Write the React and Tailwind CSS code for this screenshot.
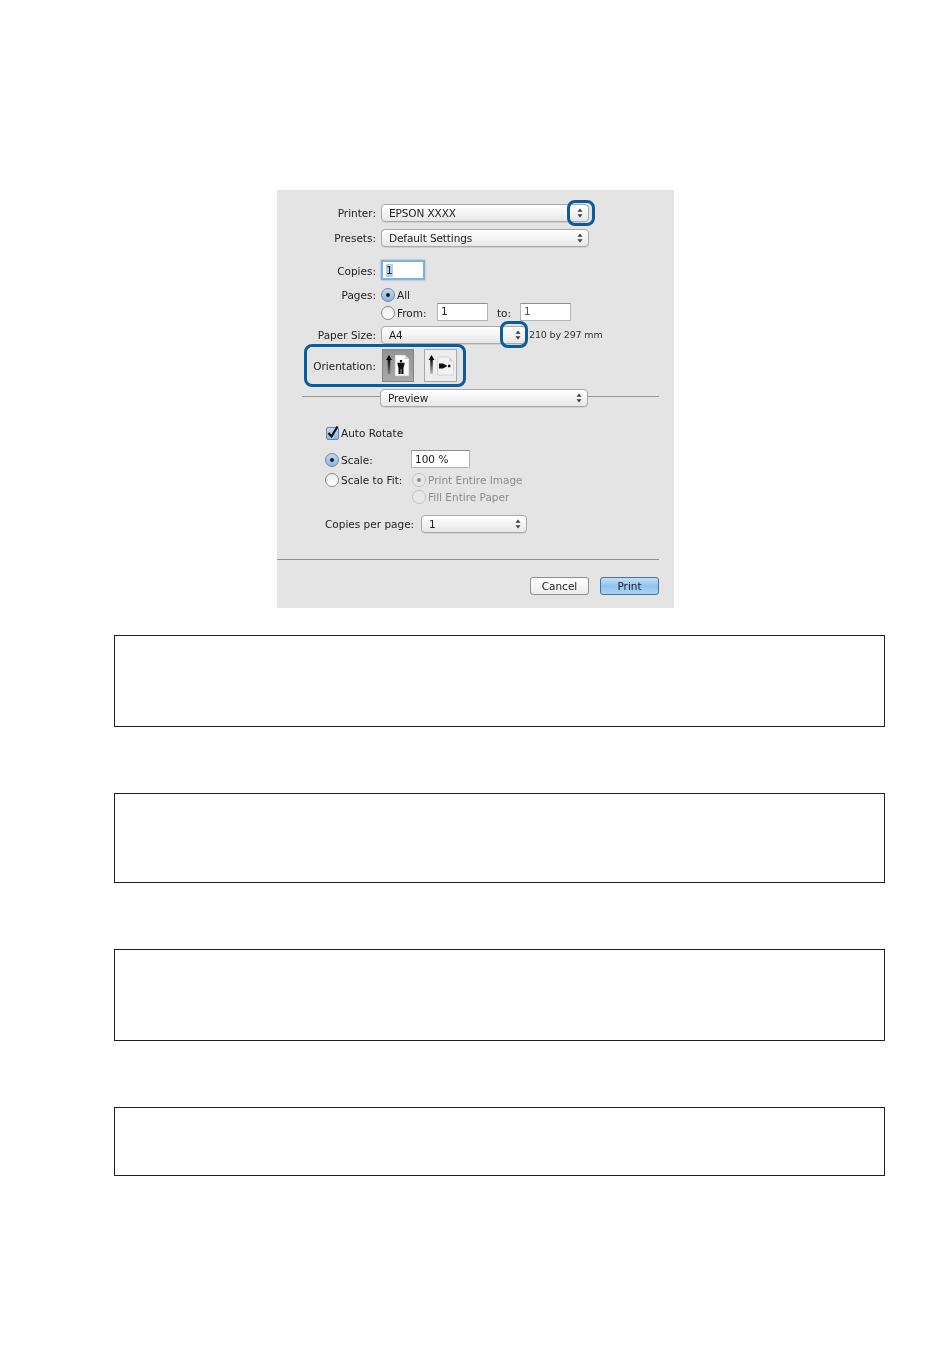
const font = { fontFamily: '"DejaVu Sans", sans-serif' };

function Arrows({ className = "" }) {
    return (
        <svg width="6" height="10" viewBox="0 0 6 10" className={className}>
            <path d="M3 0.5 L5.5 3.8 L0.5 3.8 Z" fill="#3a3a3a" />
            <path d="M3 9.5 L5.5 6.2 L0.5 6.2 Z" fill="#3a3a3a" />
        </svg>
    );
}

function Select({ label, className = "", children }) {
    return (
        <div
            className={`relative flex h-[18px] items-center justify-between rounded-[4px] border border-[#a9a9a9] bg-gradient-to-b from-white via-[#f4f4f4] to-[#e6e6e6] pl-[7px] pr-[5px] shadow-[0_1px_0_#d0d0d0] ${className}`}
        >
            <span className="text-[10.5px] leading-none tracking-[-0.1px] text-[#222]">{label}</span>
            <Arrows />
            {children}
        </div>
    );
}

function Ring({ className = "" }) {
    return (
        <div
            className={`pointer-events-none absolute rounded-[8px] border-[3px] border-[#0b5c9c] ${className}`}
        />
    );
}

function Radio({ checked, disabled, className = "" }) {
    return (
        <span
            className={`flex h-[14px] w-[14px] shrink-0 items-center justify-center rounded-full border ${className} ${
                disabled
                    ? "border-[#c4c4c4] bg-[#e8e8e8]"
                    : checked
                      ? "border-[#6b86a6] bg-gradient-to-b from-[#c3d9ef] to-[#8db7e0]"
                      : "border-[#8a8a8a] bg-gradient-to-b from-[#ececec] to-white"
            }`}
        >
            {checked && (
                <span
                    className={`h-[4px] w-[4px] rounded-full ${disabled ? "bg-[#8c8c8c]" : "bg-[#1a1a1a]"}`}
                />
            )}
        </span>
    );
}

function Field({ value, className = "", muted }) {
    return (
        <div
            className={`flex h-[18px] items-center border border-[#b5b5b5] border-t-[#8f8f8f] bg-white pl-[3px] text-[10.5px] ${
                muted ? "text-[#555]" : "text-[#222]"
            } ${className}`}
        >
            {value}
        </div>
    );
}

function Label({ children, className = "" }) {
    return (
        <span
            className={`w-[99px] shrink-0 whitespace-nowrap text-right text-[10.5px] leading-none text-[#222] ${className}`}
        >
            {children}
        </span>
    );
}

function OrientationIcon({ id, landscape }) {
    return (
        <svg width="28" height="27" viewBox="0 0 28 27">
            <defs>
                <linearGradient id={id} x1="0" y1="0" x2="0" y2="1">
                    <stop offset="0" stopColor="#000" />
                    <stop offset="1" stopColor="#000" stopOpacity="0.2" />
                </linearGradient>
            </defs>
            {landscape ? (
                <>
                    <path d="M4.5 3 L7.5 8 L1.5 8 Z" fill="#000" />
                    <rect x="3.2" y="7" width="2.6" height="15" fill={`url(#${id})`} />
                    <path d="M10.5 5 H22 L26.5 9.5 V23 H10.5 Z" fill="#f2f2f2" stroke="#c4c4c4" strokeWidth="0.6" />
                    <path d="M22 5 V9.5 H26.5 Z" fill="#d4d4d4" />
                    <path d="M12 11.5 H16 L20.5 14 L16 16.5 H12 Z M21 12.8 H23.4 V15.2 H21 Z" fill="#111" />
                </>
            ) : (
                <>
                    <path d="M5 3 L8 8 L2 8 Z" fill="#000" />
                    <rect x="3.7" y="7" width="2.6" height="15" fill={`url(#${id})`} />
                    <path d="M11 3 H21 L25 7 V24 H11 Z" fill="#fbfbfb" stroke="#bbb" strokeWidth="0.6" />
                    <path d="M21 3 V7 H25 Z" fill="#d4d4d4" />
                    <path
                        d="M15.9 8 H18.1 V10.2 H15.9 Z M13.5 10.8 H20.5 V12.2 L19.5 16 V22 H17.3 V17 H16.7 V22 H14.5 V16 L13.5 12.2 Z"
                        fill="#111"
                    />
                </>
            )}
        </svg>
    );
}

function OrientationButton({ active, landscape }) {
    return (
        <div
            className={`flex h-[33px] items-center justify-center border ${
                active
                    ? "w-[32px] border-[#858585] bg-gradient-to-b from-[#949494] to-[#a8a8a8]"
                    : "w-[33px] border-[#a9a9a9] bg-[#ededed]"
            }`}
        >
            <OrientationIcon id={active ? "tailA" : "tailB"} landscape={landscape} />
        </div>
    );
}

function PrintDialog() {
    return (
        <div className="relative ml-[277px] h-[418px] w-[397px] bg-[#e4e4e4] pt-[14px] text-[#222] blur-[0.35px]">
            <div className="flex items-center gap-[5px]">
                <Label>Printer:</Label>
                <Select label="EPSON XXXX" className="w-[208px]">
                    <Ring className="left-[185px] top-[-5px] h-[26px] w-[28px]" />
                </Select>
            </div>
            <div className="mt-[7px] flex items-center gap-[5px]">
                <Label>Presets:</Label>
                <Select label="Default Settings" className="w-[208px]" />
            </div>
            <div className="mt-[13px] flex items-center gap-[5px]">
                <Label className="pt-[2px]">Copies:</Label>
                <div className="flex h-[20px] w-[44px] items-center border-[2px] border-[#7fb0dc] bg-white pl-[3px] shadow-[0_0_2px_#7fb0dc]">
                    <span className="bg-[#b4d0ee] text-[10.5px] leading-[13px]">1</span>
                </div>
            </div>
            <div className="mt-[8px] flex h-[14px] items-center gap-[5px]">
                <Label>Pages:</Label>
                <Radio checked />
                <span className="-ml-[3px] pt-[2px] text-[10.5px]">All</span>
            </div>
            <div className="mt-[1px] flex h-[18px] items-center gap-[5px] pl-[104px]">
                <Radio className="mt-[2px]" />
                <span className="-ml-[3px] w-[35px] pt-[3px] text-[10.5px]">From:</span>
                <Field value="1" className="w-[51px]" />
                <span className="ml-[4px] w-[18px] pt-[3px] text-[10.5px]">to:</span>
                <Field value="1" className="w-[51px]" muted />
            </div>
            <div className="mt-[5px] flex h-[18px] items-center gap-[5px]">
                <Label>Paper Size:</Label>
                <Select label="A4" className="w-[146px]">
                    <Ring className="left-[118px] top-[-6px] h-[27px] w-[28px]" />
                </Select>
                <span className="-ml-[3px] whitespace-nowrap text-[9.5px] tracking-[-0.15px] text-[#333]">
                    210 by 297 mm
                </span>
            </div>
            <div className="relative mt-[5px] flex items-center gap-[5px]">
                <Label className="pt-[2px]">Orientation:</Label>
                <div className="ml-[1px] flex gap-[10px]">
                    <OrientationButton active />
                    <OrientationButton landscape />
                </div>
                <Ring className="left-[27px] top-[-5px] h-[43px] w-[162px]" />
            </div>
            <div className="mt-[7px] flex items-center pl-[25px] pr-[15px]">
                <div className="mb-[3px] h-px w-[78px] bg-[#999]" />
                <Select label="Preview" className="w-[208px]" />
                <div className="mb-[3px] h-px flex-1 bg-[#999]" />
            </div>
            <div className="mt-[19px] flex h-[14px] items-center gap-[2px] pl-[49px]">
                <span className="flex h-[13px] w-[13px] items-center justify-center rounded-[2px] border border-[#6b86a6] bg-gradient-to-b from-[#c3d9ef] to-[#8db7e0]">
                    <svg width="13" height="13" viewBox="0 0 13 13" className="overflow-visible">
                        <path d="M2.5 6 L5.5 9.5 L11.5 -0.5" fill="none" stroke="#111" strokeWidth="2.2" />
                    </svg>
                </span>
                <span className="text-[10.5px] leading-none">Auto Rotate</span>
            </div>
            <div className="mt-[10px] flex h-[18px] items-center pl-[48px]">
                <Radio checked className="mt-[2px]" />
                <span className="ml-[2px] w-[70px] pt-[3px] text-[10.5px]">Scale:</span>
                <Field value="100 %" className="w-[59px] pt-[2px]" />
            </div>
            <div className="mt-[5px] flex h-[14px] items-center pl-[48px]">
                <Radio />
                <span className="ml-[2px] w-[71px] whitespace-nowrap pt-[2px] text-[10.5px]">Scale to Fit:</span>
                <Radio checked disabled />
                <span className="ml-[2px] pt-[2px] text-[10.5px] text-[#8b8b8b]">Print Entire Image</span>
            </div>
            <div className="mt-[3px] flex h-[14px] items-center pl-[135px]">
                <Radio disabled />
                <span className="ml-[2px] pt-[2px] text-[10.5px] text-[#8b8b8b]">Fill Entire Paper</span>
            </div>
            <div className="mt-[11px] flex h-[18px] items-center pl-[48px]">
                <span className="w-[96px] whitespace-nowrap pt-[2px] text-[10.5px]">Copies per page:</span>
                <Select label="1" className="w-[106px]" />
            </div>
            <div className="mt-[26px] mr-[15px] h-px bg-[#8f8f8f]" />
            <div className="mt-[17px] flex justify-end gap-[11px] pr-[15px]">
                <button className="h-[18px] w-[59px] rounded-[3px] border border-[#8e8e8e] bg-gradient-to-b from-white to-[#ececec] text-[10.5px] leading-none text-[#222]">
                    Cancel
                </button>
                <button className="h-[18px] w-[59px] rounded-[3px] border border-[#4d7199] bg-gradient-to-b from-[#c5dff5] via-[#8fc4ef] to-[#a7d4f6] text-[10.5px] leading-none text-[#222]">
                    Print
                </button>
            </div>
        </div>
    );
}

const boxes = [
    { height: "h-[92px]", gap: "mt-[27px]" },
    { height: "h-[90px]", gap: "mt-[66px]" },
    { height: "h-[92px]", gap: "mt-[66px]" },
    { height: "h-[69px]", gap: "mt-[66px]" },
];

function App() {
    return (
        <div className="min-h-[1370px] bg-white pt-[190px]" style={font}>
            <PrintDialog />
            {boxes.map((box, i) => (
                <div
                    key={i}
                    className={`ml-[114px] w-[771px] border border-[#231f20] ${box.height} ${box.gap}`}
                />
            ))}
        </div>
    );
}

export default App;
